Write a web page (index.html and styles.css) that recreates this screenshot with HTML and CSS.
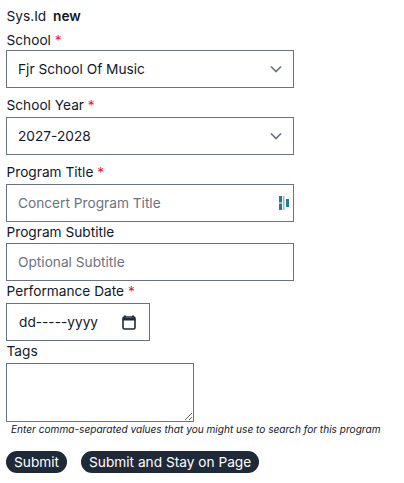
FILE: index.html
```html
<!DOCTYPE html>
<html lang="en">
<head>
    <meta charset="UTF-8">
    <meta name="viewport" content="width=device-width, initial-scale=1.0">
    <title>Program</title>
    <link rel="stylesheet" href="styles.css">
</head>
<body>
    <form class="program-form">
        <div class="sys-row">Sys.Id <b class="sys-value">new</b></div>

        <label class="field-label label-school" for="school">School <span class="req">*</span></label>
        <div class="select-wrap">
            <select id="school" class="field-box">
                <option>Fjr School Of Music</option>
            </select>
            <svg class="chevron" viewBox="0 0 12 8" width="12" height="8"><path d="M1 1.500l5 5 5-5" fill="none" stroke="#6b7280" stroke-width="1.7"/></svg>
        </div>

        <label class="field-label label-year" for="year">School Year <span class="req">*</span></label>
        <div class="select-wrap">
            <select id="year" class="field-box">
                <option>2027-2028</option>
            </select>
            <svg class="chevron" viewBox="0 0 12 8" width="12" height="8"><path d="M1 1.500l5 5 5-5" fill="none" stroke="#6b7280" stroke-width="1.7"/></svg>
        </div>

        <label class="field-label label-title" for="title">Program Title <span class="req">*</span></label>
        <div class="input-wrap">
            <input id="title" class="field-box" type="text" placeholder="Concert Program Title">
            <svg class="lp-icon" viewBox="0 0 10 14" width="10" height="14">
                <path d="M0 0h3v6.500H0zM0 7.500h3V14H0z" fill="#1f7f93"/>
                <path d="M4 0h1.500v14H4z" fill="#8fc0cb"/>
                <path d="M7 3h3v8H7z" fill="#1f7f93"/>
            </svg>
        </div>

        <label class="field-label label-subtitle" for="subtitle">Program Subtitle</label>
        <input id="subtitle" class="field-box" type="text" placeholder="Optional Subtitle">

        <label class="field-label label-tight" for="perf">Performance Date <span class="req">*</span></label>
        <div class="date-box">
            <span id="perf">dd-----yyyy</span>
            <svg viewBox="0 0 14 15" width="14" height="15"><path d="M3 .5v2M11 .5v2" stroke="#1f2937" stroke-width="2"/><rect x="1" y="2" width="12" height="12" rx="1.500" fill="none" stroke="#1f2937" stroke-width="1.600"/><path d="M1 3h12v2.500H1z" fill="#1f2937"/></svg>
        </div>

        <label class="field-label label-tight" for="tags">Tags</label>
        <textarea id="tags" class="tags-box"></textarea>
        <div class="hint">Enter comma-separated values that you might use to search for this program</div>

        <div class="actions">
            <button type="button" class="pill-btn">Submit</button>
            <button type="button" class="pill-btn">Submit and Stay on Page</button>
        </div>
    </form>
</body>
</html>
```

FILE: styles.css
```css
body {
    margin: 0;
    padding: 8px 6px 0 6.5px;
    background: #fff;
    color: #111827;
    font-family: 'Inter', 'Liberation Sans', sans-serif;
    font-size: 13.7px;
}
.program-form {
    display: flex;
    flex-direction: column;
    align-items: flex-start;
}
.sys-row {
    line-height: 17px;
}
.sys-value {
    margin-left: 3px;
    font-weight: 600;
}
.field-label {
    display: block;
    line-height: 17px;
}
.label-school {
    margin-top: 7px;
    margin-bottom: 1px;
}
.label-year {
    margin-top: 9px;
    margin-bottom: 3px;
}
.label-title {
    margin-top: 9px;
    margin-bottom: 3px;
}
.label-subtitle {
    margin-top: 2px;
    margin-bottom: 2px;
}
.label-tight {
    margin-top: 2px;
    margin-bottom: 3px;
}
.req {
    color: #f0143c;
}
.field-box {
    display: block;
    width: 288px;
    height: 38px;
    margin-left: -0.5px;
    padding: 0 11px;
    border: 1px solid #6b7280;
    border-radius: 0;
    box-sizing: border-box;
    background: #fff;
    color: #111827;
    font-family: inherit;
    font-size: 13.7px;
    outline: none;
    appearance: none;
}
.field-box::placeholder {
    color: #6b7280;
    opacity: 1;
}
.select-wrap,
.input-wrap {
    position: relative;
}
.chevron {
    position: absolute;
    right: 12px;
    top: 15px;
}
.lp-icon {
    position: absolute;
    right: 5px;
    top: 12px;
}
.date-box {
    display: flex;
    align-items: center;
    justify-content: space-between;
    width: 144px;
    height: 38px;
    margin-left: -0.5px;
    padding: 0 13px 0 12px;
    border: 1px solid #6b7280;
    box-sizing: border-box;
}
.tags-box {
    display: block;
    width: 188px;
    height: 59px;
    margin: 0 0 0 -0.5px;
    border: 1px solid #6b7280;
    border-radius: 0;
    box-sizing: border-box;
    outline: none;
}
.hint {
    margin-top: 0;
    margin-left: 4.5px;
    font-size: 10.1px;
    font-style: italic;
    line-height: 14px;
    white-space: nowrap;
}
.actions {
    display: flex;
    gap: 14px;
    margin-top: 15px;
    margin-left: -0.5px;
}
.pill-btn {
    height: 22px;
    padding: 0 8px;
    border: none;
    border-radius: 11px;
    background: #1f2937;
    color: #fff;
    font-family: inherit;
    font-size: 13.7px;
}
```
